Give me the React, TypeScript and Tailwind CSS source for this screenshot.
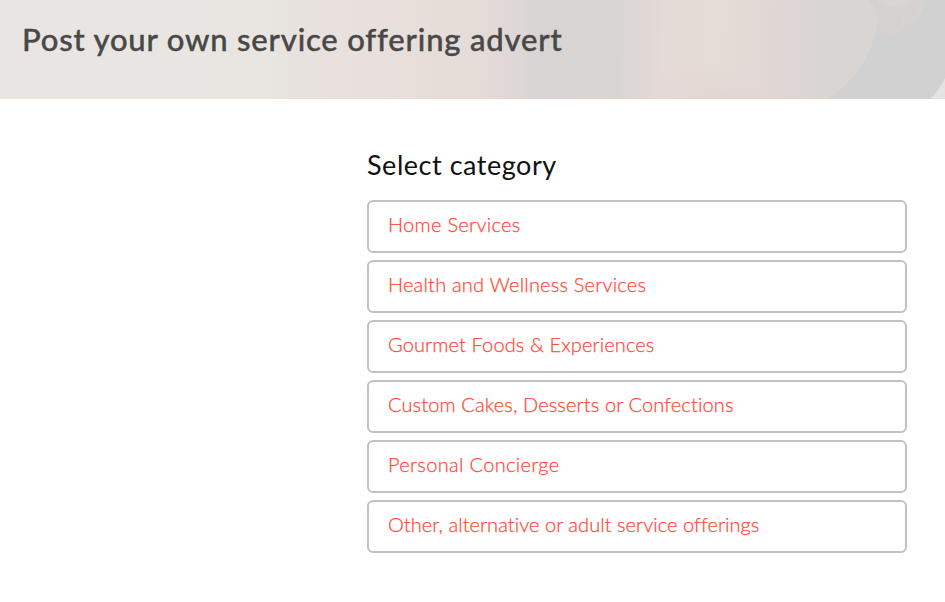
interface Category {
  name: string
  tracking: string
}

const categories: Category[] = [
  { name: 'Home Services', tracking: 'tracking-[0.3px]' },
  { name: 'Health and Wellness Services', tracking: 'tracking-[0.2px]' },
  { name: 'Gourmet Foods & Experiences', tracking: 'tracking-[0.12px]' },
  { name: 'Custom Cakes, Desserts or Confections', tracking: 'tracking-[0.13px]' },
  { name: 'Personal Concierge', tracking: 'tracking-[0.33px]' },
  { name: 'Other, alternative or adult service offerings', tracking: 'tracking-[0.05px]' },
]

// Washed out portrait behind the page title
function BannerPhoto() {
  return (
    <svg
      className="absolute inset-0 h-full w-full"
      viewBox="0 0 945 99"
      preserveAspectRatio="none"
      aria-hidden="true"
    >
      <defs>
        <linearGradient id="skin" gradientUnits="userSpaceOnUse" x1="0" y1="0" x2="945" y2="4">
          <stop offset="0" stopColor="#e9e5e2" />
          <stop offset="0.28" stopColor="#e9e6e2" />
          <stop offset="0.31" stopColor="#e8e2de" />
          <stop offset="0.35" stopColor="#e9e1dd" />
          <stop offset="0.43" stopColor="#e7dfda" />
          <stop offset="0.51" stopColor="#e5dbd7" />
          <stop offset="0.54" stopColor="#dfd8d6" />
          <stop offset="0.575" stopColor="#d7d4d3" />
          <stop offset="0.64" stopColor="#d7d4d2" />
          <stop offset="0.67" stopColor="#ddd6d4" />
          <stop offset="0.7" stopColor="#e4dad6" />
          <stop offset="0.76" stopColor="#e5dcd6" />
          <stop offset="0.81" stopColor="#e1d8d5" />
          <stop offset="0.85" stopColor="#dcd5d3" />
          <stop offset="0.88" stopColor="#d8d5d3" />
          <stop offset="0.93" stopColor="#dad5d3" />
        </linearGradient>
        <radialGradient
          id="blush"
          gradientUnits="userSpaceOnUse"
          cx="0"
          cy="0"
          r="1"
          gradientTransform="translate(720 112) scale(100 50)"
        >
          <stop offset="0" stopColor="#dfd3d0" />
          <stop offset="1" stopColor="#e2d7d4" stopOpacity="0" />
        </radialGradient>
      </defs>
      <rect width="945" height="99" fill="url(#skin)" />
      <rect x="620" y="60" width="200" height="39" fill="url(#blush)" />
      {/* hair behind the cheek */}
      <path d="M869 0 Q878 8 877 24 Q870 70 827 99 H945 V0Z" fill="#d1d1d1" />
      {/* ear */}
      <path d="M869 0 H925 Q924 16 914 23 Q905 27 900 34 Q892 39 883 33 Q877 28 877 12Z" fill="#d4d1d0" />
      <path d="M876 0 H914 Q908 9 895 7 Q885 8 876 0Z" fill="#d9d4d2" />
      <path
        d="M905 12 Q901 18 903 26 M921 8 Q918 17 910 21"
        fill="none"
        stroke="#d7d3d1"
        strokeWidth="2.5"
        strokeLinecap="round"
      />
      <path d="M878 16 Q871 70 827 99" fill="none" stroke="#dbd7d5" strokeWidth="1" />
      <path d="M945 78 Q939 91 930 99 H945Z" fill="#e4e3e2" />
    </svg>
  )
}

export default function App() {
  return (
    <div className="min-h-screen bg-white font-['Lato',sans-serif]">
      {/* Banner */}
      <header className="relative h-[99px] overflow-hidden bg-[#e9e5e2]">
        <BannerPhoto />
        <h1 className="relative pt-[19px] pl-[22px] text-[31px] leading-[40px] font-medium tracking-[0.82px] whitespace-nowrap text-[#484848] [-webkit-text-stroke:0.4px_#484848]">
          Post your own service offering advert
        </h1>
      </header>

      {/* Category picker */}
      <main className="ml-[367px] w-[540px] pt-[46px]">
        <h2 className="text-[27px] leading-[40px] tracking-[0.53px] text-[#111]">Select category</h2>
        <ul className="mt-[15px] flex flex-col gap-[7px]">
          {categories.map((category) => (
            <li key={category.name}>
              <a
                href="#"
                className={`block h-[53px] rounded-md border-2 border-[#c1c1c1] pt-[8px] pl-[19px] text-[20px] leading-[28px] font-light whitespace-nowrap text-[#ff4a36] [-webkit-text-stroke:0.25px_#ff4a36] ${category.tracking}`}
              >
                {category.name}
              </a>
            </li>
          ))}
        </ul>
      </main>
    </div>
  )
}
